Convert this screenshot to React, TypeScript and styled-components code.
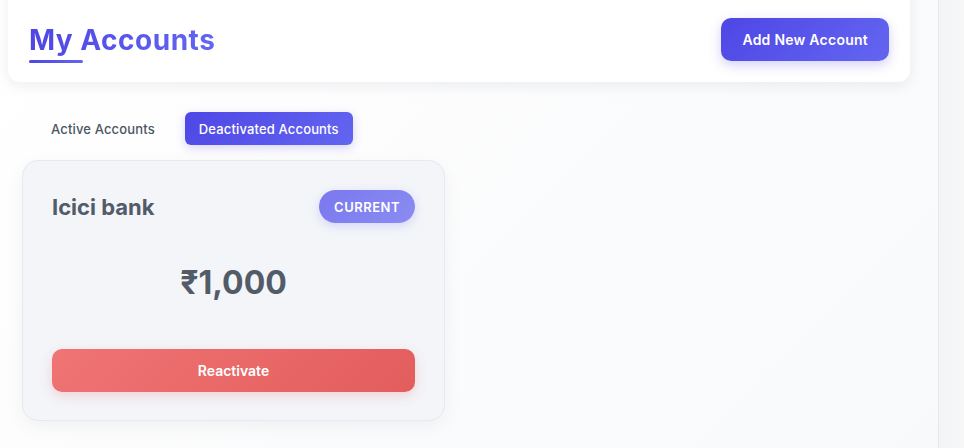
import React from "react";
import styled, { createGlobalStyle } from "styled-components";

const GlobalStyle = createGlobalStyle`
  html, body {
    margin: 0;
    padding: 0;
    height: 100%;
  }
  body {
    font-family: Inter, "Noto Sans", "Liberation Sans", sans-serif;
    background: #f9fafb;
    overflow: hidden;
  }
  #root {
    height: 100%;
  }
`;

const Layout = styled.div`
  display: flex;
  height: 448px;
  overflow: hidden;
`;

const Main = styled.main`
  flex: 1;
  padding: 0 28px 0 8px;
  background: linear-gradient(135deg, #ffffff 0%, #f8f9fb 100%);
`;

const Strip = styled.aside`
  width: 25px;
  flex-shrink: 0;
  border-left: 1px solid #e7e8eb;
  background: linear-gradient(90deg, #f3f4f6 0%, #f7f7f8 100%);
`;

const Header = styled.header`
  display: flex;
  align-items: center;
  justify-content: space-between;
  margin-top: -20px;
  padding: 38px 21px 21px 21px;
  background: #ffffff;
  border-radius: 12px;
  box-shadow: 0 4px 14px rgba(15, 23, 42, 0.07);
`;

const Title = styled.h1`
  position: relative;
  margin: 0;
  font-size: 28px;
  font-weight: 700;
  line-height: 40px;
  letter-spacing: 0.5px;
  background: linear-gradient(90deg, #4f46e5 0%, #6366f1 100%);
  -webkit-background-clip: text;
  background-clip: text;
  color: transparent;

  &::after {
    content: "";
    position: absolute;
    left: 0;
    bottom: -3px;
    width: 54px;
    height: 3px;
    border-radius: 2px;
    background: linear-gradient(90deg, #4f46e5 0%, #6366f1 100%);
  }
`;

const PrimaryButton = styled.button`
  height: 43px;
  padding: 0 21px;
  border: none;
  border-radius: 10px;
  font-family: inherit;
  font-size: 14px;
  font-weight: 600;
  letter-spacing: 0.25px;
  color: #ffffff;
  background: linear-gradient(135deg, #4f46e5 0%, #6366f1 100%);
  box-shadow: 0 4px 12px rgba(79, 70, 229, 0.25);
  cursor: pointer;
`;

const Content = styled.section`
  padding: 30px 0 0 14px;
`;

const Tabs = styled.div`
  display: flex;
  gap: 16px;
  margin-left: 15px;
`;

const Tab = styled.button<{ $active?: boolean }>`
  height: 33px;
  padding: 0 14px;
  border: none;
  border-radius: 6px;
  font-family: inherit;
  font-size: 13px;
  font-weight: 500;
  letter-spacing: 0.15px;
  cursor: pointer;
  color: ${(p) => (p.$active ? "#ffffff" : "#4b5563")};
  background: ${(p) =>
    p.$active ? "linear-gradient(135deg, #4f46e5 0%, #6366f1 100%)" : "transparent"};
  box-shadow: ${(p) => (p.$active ? "0 3px 10px rgba(79, 70, 229, 0.22)" : "none")};
`;

const CardGrid = styled.div`
  display: grid;
  grid-template-columns: 423px;
  margin-top: 15px;
`;

const Card = styled.div`
  box-sizing: border-box;
  height: 261px;
  padding: 29px 29px 28px 29px;
  background: #f3f5f9;
  border: 1px solid #e6e9ef;
  border-radius: 16px;
  box-shadow: 0 6px 20px rgba(15, 23, 42, 0.05);
`;

const CardTop = styled.div`
  display: flex;
  align-items: center;
  justify-content: space-between;
`;

const BankName = styled.h2`
  margin: 0;
  font-size: 22px;
  font-weight: 700;
  color: #525b68;
`;

const Badge = styled.span`
  display: inline-flex;
  align-items: center;
  height: 33px;
  padding: 0 15px;
  border-radius: 999px;
  font-size: 13px;
  font-weight: 600;
  letter-spacing: 0.5px;
  color: #ffffff;
  background: linear-gradient(135deg, #7a78ee 0%, #8a8cf2 100%);
  box-shadow: 0 3px 10px rgba(122, 120, 238, 0.25);
`;

const Amount = styled.div`
  margin: 40px 0 46px;
  text-align: center;
  font-size: 32px;
  font-weight: 700;
  line-height: 40px;
  color: #525b68;
`;

const DangerButton = styled.button`
  width: 100%;
  height: 43px;
  border: none;
  border-radius: 10px;
  font-family: inherit;
  font-size: 14px;
  font-weight: 600;
  color: #ffffff;
  background: linear-gradient(135deg, #f07474 0%, #e35d5d 100%);
  box-shadow: 0 4px 12px rgba(227, 93, 93, 0.22);
  cursor: pointer;
`;

const accounts = [{ name: "Icici bank", type: "CURRENT", balance: "₹1,000" }];

export default function App() {
  return (
    <>
      <GlobalStyle />
      <Layout>
        <Main>
          <Header>
            <Title>My Accounts</Title>
            <PrimaryButton>Add New Account</PrimaryButton>
          </Header>
          <Content>
            <Tabs>
              <Tab>Active Accounts</Tab>
              <Tab $active>Deactivated Accounts</Tab>
            </Tabs>
            <CardGrid>
              {accounts.map((a) => (
                <Card key={a.name}>
                  <CardTop>
                    <BankName>{a.name}</BankName>
                    <Badge>{a.type}</Badge>
                  </CardTop>
                  <Amount>{a.balance}</Amount>
                  <DangerButton>Reactivate</DangerButton>
                </Card>
              ))}
            </CardGrid>
          </Content>
        </Main>
        <Strip />
      </Layout>
    </>
  );
}
